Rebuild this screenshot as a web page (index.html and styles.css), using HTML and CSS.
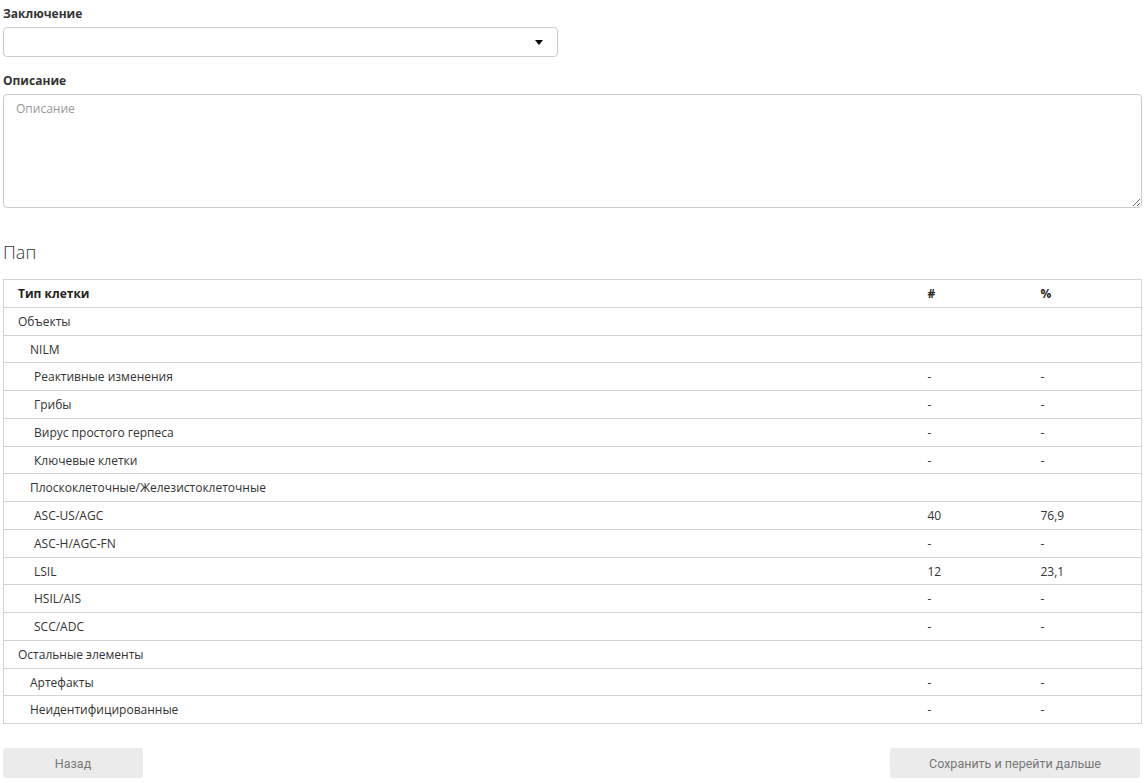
FILE: index.html
```html
<!DOCTYPE html>
<html lang="ru">
<head>
<meta charset="utf-8">
<title>Пап</title>
<link rel="stylesheet" href="styles.css">
</head>
<body>
<div class="page">
  <div class="field">
    <label class="label">Заключение</label>
    <div class="select">
      <span class="select-value"></span>
      <span class="caret"></span>
    </div>
  </div>
  <div class="field field-desc">
    <label class="label">Описание</label>
    <textarea class="textarea" placeholder="Описание"></textarea>
  </div>

  <h2 class="title">Пап</h2>

  <table class="grid">
    <thead>
      <tr><th class="c-name">Тип клетки</th><th class="c-num">#</th><th class="c-pct">%</th></tr>
    </thead>
    <tbody>
      <tr><td class="l1">Объекты</td><td></td><td></td></tr>
      <tr><td class="l2">NILM</td><td></td><td></td></tr>
      <tr><td class="l3">Реактивные изменения</td><td>-</td><td>-</td></tr>
      <tr><td class="l3">Грибы</td><td>-</td><td>-</td></tr>
      <tr><td class="l3">Вирус простого герпеса</td><td>-</td><td>-</td></tr>
      <tr><td class="l3">Ключевые клетки</td><td>-</td><td>-</td></tr>
      <tr><td class="l2">Плоскоклеточные/Железистоклеточные</td><td></td><td></td></tr>
      <tr><td class="l3">ASC-US/AGC</td><td>40</td><td>76,9</td></tr>
      <tr><td class="l3">ASC-H/AGC-FN</td><td>-</td><td>-</td></tr>
      <tr><td class="l3">LSIL</td><td>12</td><td>23,1</td></tr>
      <tr><td class="l3">HSIL/AIS</td><td>-</td><td>-</td></tr>
      <tr><td class="l3">SCC/ADC</td><td>-</td><td>-</td></tr>
      <tr><td class="l1">Остальные элементы</td><td></td><td></td></tr>
      <tr><td class="l2">Артефакты</td><td>-</td><td>-</td></tr>
      <tr><td class="l2">Неидентифицированные</td><td>-</td><td>-</td></tr>
    </tbody>
  </table>

  <div class="actions">
    <button class="btn btn-back" type="button">Назад</button>
    <button class="btn btn-next" type="button">Сохранить и перейти дальше</button>
  </div>
</div>
</body>
</html>
```
FILE: styles.css
```css
* { box-sizing: border-box; }
html, body { margin: 0; padding: 0; background: #fff; }
body {
  font-family: "Open Sans", "Noto Sans", sans-serif;
  font-size: 12px;
  color: #333;
}
.page {
  padding: 5px 2px 0 3px;
}
.field { display: flex; flex-direction: column; }
.label {
  font-weight: 700;
  font-size: 12px;
  line-height: 17px;
  color: #333;
  margin-bottom: 5px;
}
.select {
  width: 555px;
  height: 30px;
  border: 1px solid #ccc;
  border-radius: 4px;
  display: flex;
  align-items: center;
  justify-content: space-between;
  padding: 0 14px 0 12px;
  background: #fff;
}
.caret {
  width: 0; height: 0;
  border-left: 4.5px solid transparent;
  border-right: 4.5px solid transparent;
  border-top: 5px solid #000;
  margin-top: 1px;
}
.field-desc { margin-top: 15px; }
.textarea {
  width: 100%;
  height: 114px;
  border: 1px solid #ccc;
  border-radius: 4px;
  padding: 5px 12px;
  font-family: "Open Sans", "Noto Sans", sans-serif;
  font-size: 12px;
  line-height: 17px;
  color: #333;
  resize: vertical;
  display: block;
}
.textarea::placeholder { color: #999; }
.title {
  font-weight: 300;
  font-size: 18px;
  line-height: 25px;
  margin: 32px 0 14px 0;
  color: #333;
}
.grid {
  width: 100%;
  border-collapse: collapse;
  border: 1px solid #d4d4d4;
}
.grid th, .grid td {
  text-align: left;
  font-size: 12px;
  line-height: 17px;
  padding: 5px 14px 4.75px 14px;
  border-bottom: 1px solid #d4d4d4;
}
.grid th { font-weight: 700; color: #222; }
.grid td { color: #333; }
.grid .c-num { width: 113px; }
.grid .c-pct { width: 115px; }
.grid td.l2 { padding-left: 26px; }
.grid td.l3 { padding-left: 30px; }
.actions {
  display: flex;
  justify-content: space-between;
  margin-top: 24px;
  padding-right: 2px;
}
.btn {
  height: 30px;
  border: none;
  border-radius: 3px;
  background: #ebebeb;
  color: #777;
  font-family: Roboto, "Liberation Sans", sans-serif;
  font-size: 12.5px;
  font-weight: 400;
  cursor: pointer;
}
.btn-back { width: 140px; }
.btn-next { width: 250px; }
```
